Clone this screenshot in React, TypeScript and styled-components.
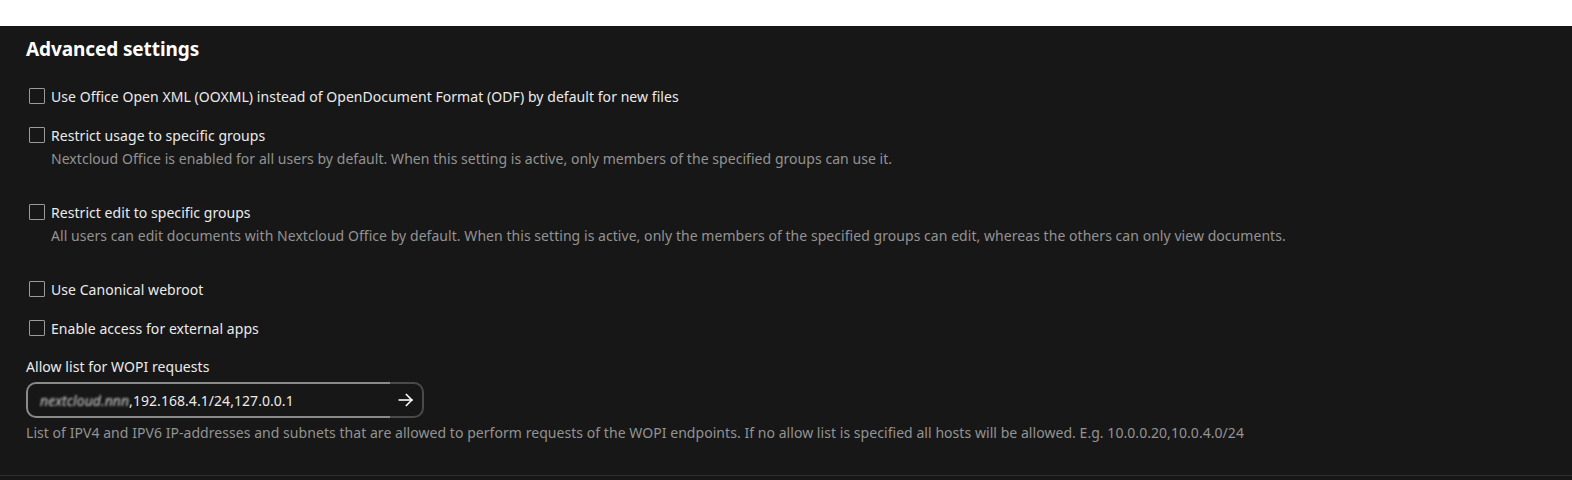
import React from "react";
import styled, { createGlobalStyle } from "styled-components";

const GlobalStyle = createGlobalStyle`
  html, body { margin: 0; padding: 0; background: #171717; }
  body { font-family: "Noto Sans", "Open Sans", sans-serif; }
`;

const Page = styled.div`
  display: flex;
  flex-direction: column;
  min-height: 480px;
  background: #171717;
`;

const TopBand = styled.div`
  height: 26px;
  background: #ffffff;
`;

const Section = styled.section`
  padding: 9px 26px 33px 26px;
  border-bottom: 1px solid #2e2e2e;
  color: #ebebeb;
  font-size: 14px;
  letter-spacing: 0.05px;
`;

const Heading = styled.h2`
  margin: 0 0 18px 0;
  font-size: 19px;
  line-height: 28px;
  font-weight: 700;
  color: #ffffff;
  letter-spacing: -0.1px;
`;

const Settings = styled.div`
  display: flex;
  flex-direction: column;
  gap: 9px;
`;

const Setting = styled.div<{ $hasDesc?: boolean }>`
  display: flex;
  flex-direction: column;
  padding-bottom: ${(p) => (p.$hasDesc ? "20px" : "0")};
`;

const CheckRow = styled.label`
  display: flex;
  align-items: center;
  gap: 6px;
  height: 30px;
  padding-left: 3px;
  cursor: pointer;
`;

const Box = styled.span`
  width: 14px;
  height: 14px;
  border: 1px solid #9a9a9a;
  border-radius: 1px;
  flex: none;
`;

const Description = styled.div`
  padding-left: 25px;
  line-height: 18px;
  color: #939393;
`;

const FieldLabel = styled.div`
  margin-top: 9px;
  line-height: 30px;
`;

const Field = styled.div`
  display: flex;
  width: 398px;
  height: 36px;
`;

const FieldInput = styled.div`
  flex: 1;
  display: flex;
  align-items: center;
  box-sizing: border-box;
  padding-left: 12px;
  border: 2px solid #8a8a8a;
  border-right: none;
  border-radius: 10px 0 0 10px;
  color: #ebebeb;
  white-space: nowrap;
`;

const Blurred = styled.span`
  filter: blur(1.1px);
  color: #d0d0d0;
  font-style: italic;
`;

const ArrowButton = styled.button`
  width: 34px;
  box-sizing: border-box;
  border: 2px solid #4a4a4a;
  border-left: none;
  border-radius: 0 10px 10px 0;
  background: transparent;
  display: flex;
  align-items: center;
  justify-content: center;
  padding: 0 0 0 0;
  color: #ffffff;
`;

const Help = styled.div`
  margin-top: 6px;
  line-height: 18px;
  color: #939393;
`;

const Arrow = () => (
  <svg width="20" height="20" viewBox="0 0 24 24" fill="none" stroke="currentColor" strokeWidth="1.9" strokeLinecap="square">
    <path d="M4 12h15" />
    <path d="M12.5 5.5l6.5 6.5-6.5 6.5" />
  </svg>
);

type Item = { label: string; desc?: string };

const items: Item[] = [
  { label: "Use Office Open XML (OOXML) instead of OpenDocument Format (ODF) by default for new files" },
  {
    label: "Restrict usage to specific groups",
    desc: "Nextcloud Office is enabled for all users by default. When this setting is active, only members of the specified groups can use it.",
  },
  {
    label: "Restrict edit to specific groups",
    desc: "All users can edit documents with Nextcloud Office by default. When this setting is active, only the members of the specified groups can edit, whereas the others can only view documents.",
  },
  { label: "Use Canonical webroot" },
  { label: "Enable access for external apps" },
];

export default function App() {
  return (
    <Page>
      <GlobalStyle />
      <TopBand />
      <Section>
        <Heading>Advanced settings</Heading>
        <Settings>
          {items.map((it) => (
            <Setting key={it.label} $hasDesc={!!it.desc}>
              <CheckRow>
                <Box />
                {it.label}
              </CheckRow>
              {it.desc && <Description>{it.desc}</Description>}
            </Setting>
          ))}
        </Settings>
        <FieldLabel>Allow list for WOPI requests</FieldLabel>
        <Field>
          <FieldInput>
            <Blurred>nextcloud.nnn</Blurred>,192.168.4.1/24,127.0.0.1
          </FieldInput>
          <ArrowButton aria-label="Save">
            <Arrow />
          </ArrowButton>
        </Field>
        <Help>
          List of IPV4 and IPV6 IP-addresses and subnets that are allowed to perform requests of the WOPI endpoints. If no allow list is specified all hosts will be allowed. E.g. 10.0.0.20,10.0.4.0/24
        </Help>
      </Section>
    </Page>
  );
}
